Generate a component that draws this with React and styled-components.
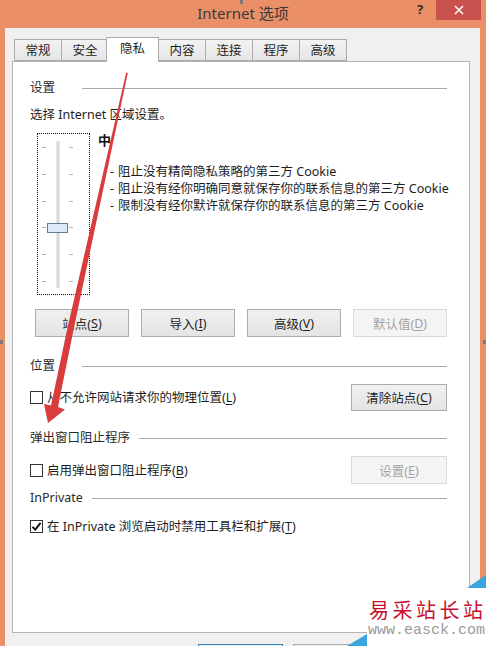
import styled, { createGlobalStyle } from "styled-components";

const FONT = `"Noto Sans", "Noto Sans CJK SC", sans-serif`;

const GlobalStyle = createGlobalStyle`
  html, body {
    margin: 0;
    padding: 0;
  }
  body {
    background: #ea8f68;
    overflow: hidden;
    font-family: ${FONT};
  }
`;

const Window = styled.div`
  position: relative;
  width: 486px;
  height: 646px;
  overflow: hidden;
  background: #ea8f68;
  display: flex;
  flex-direction: column;
`;

const TitleBar = styled.div`
  display: flex;
  height: 28px;
  flex-shrink: 0;
`;

const TitleSide = styled.div`
  flex: 1;
  display: flex;
  justify-content: flex-end;
  align-items: flex-start;
`;

const Title = styled.div`
  font-size: 15px;
  line-height: 26px;
  color: #3a3a3a;
  white-space: nowrap;
`;

const HelpButton = styled.div`
  width: 26px;
  height: 18px;
  margin-right: 3px;
  font-size: 13px;
  font-weight: bold;
  line-height: 18px;
  text-align: center;
  color: #3b2a22;
`;

const CloseButton = styled.div`
  width: 45px;
  height: 20px;
  margin-right: 5px;
  background: #c9514e;
  display: flex;
  align-items: center;
  justify-content: center;
`;

const Client = styled.div`
  flex: 1;
  margin: 0 6px 0 5px;
  padding: 9px 10px 0 7px;
  background: #f0f0f0;
  display: flex;
  flex-direction: column;
`;

const TabBar = styled.div`
  display: flex;
  align-items: flex-end;
  height: 24px;
  padding-left: 2px;
  position: relative;
  z-index: 1;
  flex-shrink: 0;
`;

const Tab = styled.div`
  box-sizing: border-box;
  width: ${(p) => (p.$active ? "53px" : "48px")};
  height: ${(p) => (p.$active ? "25px" : "22px")};
  margin-left: ${(p) => (p.$active ? "-3px" : p.$first ? "0" : "-1px")};
  margin-bottom: ${(p) => (p.$active ? "-1px" : "0")};
  border: 1px solid #acacac;
  border-bottom: ${(p) => (p.$active ? "none" : "1px solid #acacac")};
  background: ${(p) =>
    p.$active ? "#ffffff" : "linear-gradient(#f2f2f2, #e6e6e6)"};
  position: relative;
  z-index: ${(p) => (p.$active ? 2 : 1)};
  font-size: 12.5px;
  line-height: 21px;
  text-align: center;
  color: #1e1e1e;
`;

const Panel = styled.div`
  box-sizing: border-box;
  height: 572px;
  flex-shrink: 0;
  background: #ffffff;
  border: 1px solid #b4b4b4;
  padding: 17px 22px 0 17px;
  display: flex;
  flex-direction: column;
`;

const GroupHeader = styled.div`
  display: flex;
  align-items: center;
  gap: 9px;
  margin-top: ${(p) => p.$mt || 0}px;
  font-size: 12.5px;
  line-height: 17px;
  color: #2a2a2a;
`;

const GroupLabel = styled.span`
  min-width: 43px;
  white-space: nowrap;
`;

const GroupLine = styled.div`
  flex: 1;
  height: 1px;
  margin-top: 1px;
  background: #a9a9a9;
`;

const Text = styled.div`
  margin-top: ${(p) => p.$mt || 0}px;
  font-size: 12.5px;
  line-height: 17px;
  color: #1e1e1e;
  white-space: nowrap;
`;

const SliderRow = styled.div`
  display: flex;
  margin-top: 10px;
  padding-left: 7px;
  gap: 8px;
`;

const SliderBox = styled.div`
  position: relative;
  box-sizing: border-box;
  width: 53px;
  height: 162px;
  flex-shrink: 0;
  border: 1px dotted #111;
  padding: 7px 0 6px 4px;
  display: flex;
  gap: 10px;
`;

const TickColumn = styled.div`
  width: 4px;
  padding: 6px 0;
  margin-left: ${(p) => p.$offset || 0}px;
  display: flex;
  flex-direction: column;
  justify-content: space-between;
`;

const Tick = styled.div`
  height: 1px;
  background: #b3b3b3;
`;

const Track = styled.div`
  box-sizing: border-box;
  width: 4px;
  background: #dadada;
  border: 1px solid #e6e6e6;
`;

const Thumb = styled.div`
  position: absolute;
  left: 9px;
  top: 89px;
  box-sizing: border-box;
  width: 21px;
  height: 10px;
  background: #dceaf8;
  border: 1px solid #5b7f9b;
`;

const LevelInfo = styled.div`
  display: flex;
  flex-direction: column;
`;

const Level = styled.div`
  margin-top: -1px;
  font-size: 13px;
  font-weight: bold;
  line-height: 17px;
  color: #111;
`;

const BulletList = styled.div`
  margin-top: 14px;
  padding-left: 12px;
`;

const Bullet = styled.div`
  display: flex;
  font-size: 12.5px;
  line-height: 17px;
  color: #1e1e1e;
  white-space: nowrap;
`;

const Dash = styled.span`
  width: 8px;
`;

const ButtonRow = styled.div`
  display: flex;
  justify-content: space-between;
  margin-top: 14px;
  padding-left: 5px;
`;

const Button = styled.div`
  box-sizing: border-box;
  width: ${(p) => p.$w || 94}px;
  height: ${(p) => p.$h || 28}px;
  border: 1px solid ${(p) => (p.$disabled ? "#d9d9d9" : "#acacac")};
  background: ${(p) =>
    p.$disabled ? "#f4f4f4" : "linear-gradient(#f0f0f0, #e4e4e4)"};
  color: ${(p) => (p.$disabled ? "#a3a3a3" : "#1e1e1e")};
  font-size: 12.5px;
  display: flex;
  align-items: center;
  justify-content: center;
  white-space: nowrap;
`;

const Key = styled.span`
  text-decoration: underline;
  text-underline-offset: 2px;
`;

const OptionRow = styled.div`
  display: flex;
  align-items: center;
  justify-content: space-between;
  margin-top: ${(p) => p.$mt || 0}px;
  min-height: 17px;
`;

const CheckLabel = styled.div`
  display: flex;
  align-items: center;
  gap: 4px;
  font-size: 12.5px;
  line-height: 17px;
  color: #1e1e1e;
  white-space: nowrap;
`;

const CheckBox = styled.div`
  box-sizing: border-box;
  width: 13px;
  height: 13px;
  border: 1px solid #333;
  background: #fff;
  display: flex;
  align-items: center;
  justify-content: center;
`;

const DialogButtons = styled.div`
  display: flex;
  justify-content: flex-end;
  gap: 10px;
  margin-top: 11px;
  margin-right: -3px;
`;

const DialogButton = styled.div`
  box-sizing: border-box;
  width: 85px;
  height: 23px;
  border: 1px solid ${(p) => (p.$primary ? "#3c7fb1" : "#acacac")};
  background: ${(p) =>
    p.$primary ? "#e5f1fb" : "linear-gradient(#f0f0f0, #e4e4e4)"};
`;

const Arrow = styled.svg`
  position: absolute;
  left: 0;
  top: 0;
  pointer-events: none;
  z-index: 5;
`;

const Handle = styled.div`
  position: absolute;
  left: ${(p) => p.$x}px;
  top: ${(p) => p.$y}px;
  width: 3px;
  height: 4px;
  background: #7a7a7a;
  z-index: 4;
`;

const Watermark = styled.div`
  position: absolute;
  right: 0;
  bottom: 0;
  width: 139px;
  height: 71px;
  z-index: 6;
`;

const WatermarkShape = styled.svg`
  position: absolute;
  left: 0;
  top: 0;
`;

const WatermarkText = styled.div`
  position: relative;
  padding: 24px 0 0 22px;
`;

const SiteName = styled.div`
  font-family: "Noto Sans CJK SC", sans-serif;
  font-size: 20px;
  line-height: 22px;
  letter-spacing: 3.5px;
  color: #c8102e;
  white-space: nowrap;
`;

const SiteUrl = styled.div`
  margin: 1px 0 0 -1px;
  font-family: "Liberation Mono", monospace;
  font-size: 15px;
  line-height: 17px;
  color: #9a9a9a;
  white-space: nowrap;
`;

const tabs = ["常规", "安全", "隐私", "内容", "连接", "程序", "高级"];

const bullets = [
  "阻止没有精简隐私策略的第三方 Cookie",
  "阻止没有经你明确同意就保存你的联系信息的第三方 Cookie",
  "限制没有经你默许就保存你的联系信息的第三方 Cookie",
];

const Check = ({ checked }) => (
  <CheckBox>
    {checked && (
      <svg width="11" height="11" viewBox="0 0 11 11">
        <path d="M1.5 5.8 L4.3 8.6 L9.6 1.8" fill="none" stroke="#111" strokeWidth="1.9" />
      </svg>
    )}
  </CheckBox>
);

const App = () => {
  return (
    <>
      <GlobalStyle />
      <Window>
        <TitleBar>
          <TitleSide />
          <Title>Internet 选项</Title>
          <TitleSide>
            <HelpButton>?</HelpButton>
            <CloseButton>
              <svg width="10" height="10" viewBox="0 0 10 10">
                <path d="M1 1 L9 9 M9 1 L1 9" stroke="#fff" strokeWidth="1.6" />
              </svg>
            </CloseButton>
          </TitleSide>
        </TitleBar>

        <Client>
          <TabBar>
            {tabs.map((t, i) => (
              <Tab key={t} $first={i === 0} $active={t === "隐私"}>
                {t}
              </Tab>
            ))}
          </TabBar>

          <Panel>
            <GroupHeader>
              <GroupLabel>设置</GroupLabel>
              <GroupLine />
            </GroupHeader>
            <Text $mt={10}>选择 Internet 区域设置。</Text>

            <SliderRow>
              <SliderBox>
                <TickColumn>
                  {[0, 1, 2, 3, 4, 5].map((n) => (
                    <Tick key={n} />
                  ))}
                </TickColumn>
                <Track />
                <TickColumn $offset={-1}>
                  {[0, 1, 2, 3, 4, 5].map((n) => (
                    <Tick key={n} />
                  ))}
                </TickColumn>
                <Thumb />
              </SliderBox>
              <LevelInfo>
                <Level>中</Level>
                <BulletList>
                  {bullets.map((b) => (
                    <Bullet key={b}>
                      <Dash>-</Dash>
                      {b}
                    </Bullet>
                  ))}
                </BulletList>
              </LevelInfo>
            </SliderRow>

            <ButtonRow>
              <Button>
                站点(<Key>S</Key>)
              </Button>
              <Button>
                导入(<Key>I</Key>)
              </Button>
              <Button>
                高级(<Key>V</Key>)
              </Button>
              <Button $disabled>
                默认值(<Key>D</Key>)
              </Button>
            </ButtonRow>

            <GroupHeader $mt={20}>
              <GroupLabel>位置</GroupLabel>
              <GroupLine />
            </GroupHeader>
            <OptionRow $mt={10}>
              <CheckLabel>
                <Check />
                <span>
                  从不允许网站请求你的物理位置(<Key>L</Key>)
                </span>
              </CheckLabel>
              <Button $w={96} $h={27}>
                清除站点(<Key>C</Key>)
              </Button>
            </OptionRow>

            <GroupHeader $mt={18}>
              <GroupLabel>弹出窗口阻止程序</GroupLabel>
              <GroupLine />
            </GroupHeader>
            <OptionRow $mt={10}>
              <CheckLabel>
                <Check />
                <span>
                  启用弹出窗口阻止程序(<Key>B</Key>)
                </span>
              </CheckLabel>
              <Button $w={96} $disabled>
                设置(<Key>E</Key>)
              </Button>
            </OptionRow>

            <GroupHeader $mt={5}>
              <GroupLabel>InPrivate</GroupLabel>
              <GroupLine />
            </GroupHeader>
            <OptionRow $mt={12}>
              <CheckLabel>
                <Check checked />
                <span>
                  在 InPrivate 浏览启动时禁用工具栏和扩展(<Key>T</Key>)
                </span>
              </CheckLabel>
            </OptionRow>
          </Panel>

          <DialogButtons>
            <DialogButton $primary />
            <DialogButton />
            <DialogButton />
          </DialogButtons>
        </Client>

        <Arrow width="486" height="646" viewBox="0 0 486 646">
          <polygon
            points="126.2,72.5 127.8,73 73.5,330 58,407 65,409.5 48,423 44,404 51,405.5 67,330"
            fill="#d83c3c"
          />
        </Arrow>

        <Handle $x={240} $y={0} />
        <Handle $x={0} $y={340} />
        <Handle $x={483} $y={340} />

        <Watermark>
          <WatermarkShape width="139" height="71" viewBox="0 0 139 71">
            <polygon points="20,13 139,13 139,71 20,71" fill="#fff" />
            <polygon points="120,13 139,0 139,13" fill="#3ba6dc" />
            <polygon points="0,71 20,59 20,71" fill="#3ba6dc" />
          </WatermarkShape>
          <WatermarkText>
            <SiteName>易采站长站</SiteName>
            <SiteUrl>www.easck.com</SiteUrl>
          </WatermarkText>
        </Watermark>
      </Window>
    </>
  );
};

export default App;
